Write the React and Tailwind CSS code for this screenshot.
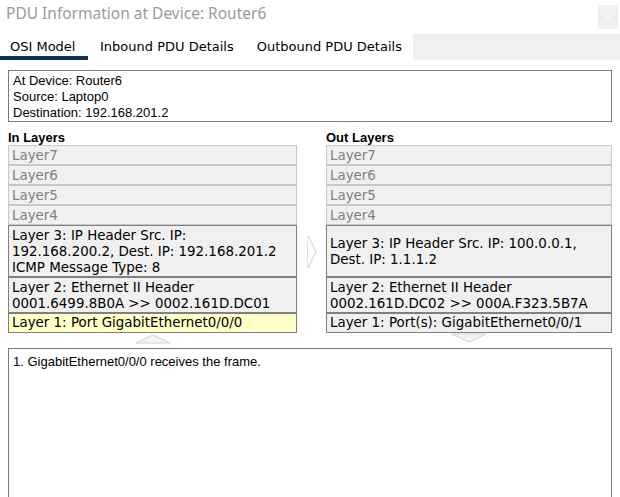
import React from "react";

const V = { fontFamily: '"DejaVu Sans", Verdana, sans-serif' };
const A = { fontFamily: '"Liberation Sans", Arial, sans-serif' };

function Dim({ children }) {
  return (
    <div className="h-[20px] border border-[#c8c8c8] bg-[#f0f0f0] pl-[3px] pt-[1px] text-[13.4px] leading-[17px] text-[#808080]">
      {children}
    </div>
  );
}

function Box({ children, h, bg = "bg-[#f0f0f0]", pt = "pt-[2px]" }) {
  return (
    <div className={`${h} ${bg} ${pt} border border-[#808080] pl-[3px] text-[13.4px] leading-[16px] text-black`}>
      {children}
    </div>
  );
}

export default function App() {
  return (
    <div className="w-[620px] h-[497px] overflow-hidden bg-white relative">
      {/* title */}
      <div className="flex h-[34px] items-start justify-between">
        <div className="pl-[6px] pt-[3px] text-[15.5px] leading-[20px] text-[#9a9a9a]" style={{ fontFamily: '"Noto Sans", "Open Sans", sans-serif' }}>
          PDU Information at Device: Router6
        </div>
        <div className="mt-[5px] mr-[2px] flex h-[24px] w-[20px] items-center justify-center bg-[#f0f0f0] text-[12px] text-white" style={A}>
          ×
        </div>
      </div>
      {/* tabs */}
      <div className="flex h-[26px] text-[13px] leading-[16px] text-black" style={V}>
        <div className="h-[26px] w-[88px] border-b-[4px] border-[#12304f] pl-[10px] pt-[5px]">OSI Model</div>
        <div className="h-[26px] pl-[12px] pr-[12px] pt-[5px]">Inbound PDU Details</div>
        <div className="h-[26px] pl-[11px] pr-[11px] pt-[5px]">Outbound PDU Details</div>
        <div className="h-[26px] flex-1 bg-[#f0f0f0]" />
      </div>
      <div className="px-[8px]">
        {/* info */}
        <div className="mt-[10px] h-[52px] border border-[#7a7a7a] px-[4px] pt-[2px] text-[13px] leading-[16px] text-black" style={A}>
          <div>At Device: Router6</div>
          <div>Source: Laptop0</div>
          <div>Destination: 192.168.201.2</div>
        </div>
        {/* layers */}
        <div className="mt-[7px] flex">
          <div className="w-[289px]">
            <div className="h-[16px] pt-[1px] text-[13px] font-bold leading-[16px] text-black" style={A}>In Layers</div>
            <div style={V}>
              <Dim>Layer7</Dim>
              <Dim>Layer6</Dim>
              <Dim>Layer5</Dim>
              <Dim>Layer4</Dim>
              <Box h="h-[52px]">
                <div>Layer 3: IP Header Src. IP:</div>
                <div>192.168.200.2, Dest. IP: 192.168.201.2</div>
                <div>ICMP Message Type: 8</div>
              </Box>
              <Box h="h-[36px]">
                <div>Layer 2: Ethernet II Header</div>
                <div>0001.6499.8B0A &gt;&gt; 0002.161D.DC01</div>
              </Box>
              <Box h="h-[20px]" bg="bg-[#ffffc8]" pt="pt-[1px]">
                <div>Layer 1: Port GigabitEthernet0/0/0</div>
              </Box>
            </div>
            <div className="flex h-[15px] justify-center pt-[1px]">
              <svg width="36" height="10" viewBox="0 0 36 10">
                <polygon points="1,9 18,1 35,9" fill="#f4f4f4" stroke="#d2d2d2" strokeWidth="1" />
              </svg>
            </div>
          </div>
          <div className="w-[29px] pl-[10px] pt-[106px]">
            <svg width="12" height="34" viewBox="0 0 12 34">
              <polyline points="1,0.5 9,16.5 1,33" fill="none" stroke="#cfcfcf" strokeWidth="1" />
              <line x1="0.5" y1="1" x2="0.5" y2="33" stroke="#e2e2e2" strokeWidth="1" />
            </svg>
          </div>
          <div className="w-[286px]">
            <div className="h-[16px] pt-[1px] text-[13px] font-bold leading-[16px] text-black" style={A}>Out Layers</div>
            <div style={V}>
              <Dim>Layer7</Dim>
              <Dim>Layer6</Dim>
              <Dim>Layer5</Dim>
              <Dim>Layer4</Dim>
              <Box h="h-[52px]" pt="pt-[10px]">
                <div>Layer 3: IP Header Src. IP: 100.0.0.1,</div>
                <div>Dest. IP: 1.1.1.2</div>
              </Box>
              <Box h="h-[36px]">
                <div>Layer 2: Ethernet II Header</div>
                <div>0002.161D.DC02 &gt;&gt; 000A.F323.5B7A</div>
              </Box>
              <Box h="h-[20px]" pt="pt-[1px]">
                <div>Layer 1: Port(s): GigabitEthernet0/0/1</div>
              </Box>
            </div>
            <div className="flex h-[15px] justify-center pt-[0px]">
              <svg width="36" height="10" viewBox="0 0 36 10">
                <polygon points="1,1 18,9 35,1" fill="#f4f4f4" stroke="#d2d2d2" strokeWidth="1" />
              </svg>
            </div>
          </div>
        </div>
        {/* description */}
        <div className="h-[170px] border border-[#7a7a7a] px-[4px] pt-[5px] text-[13px] leading-[16px] text-black" style={A}>
          1. GigabitEthernet0/0/0 receives the frame.
        </div>
      </div>
    </div>
  );
}
